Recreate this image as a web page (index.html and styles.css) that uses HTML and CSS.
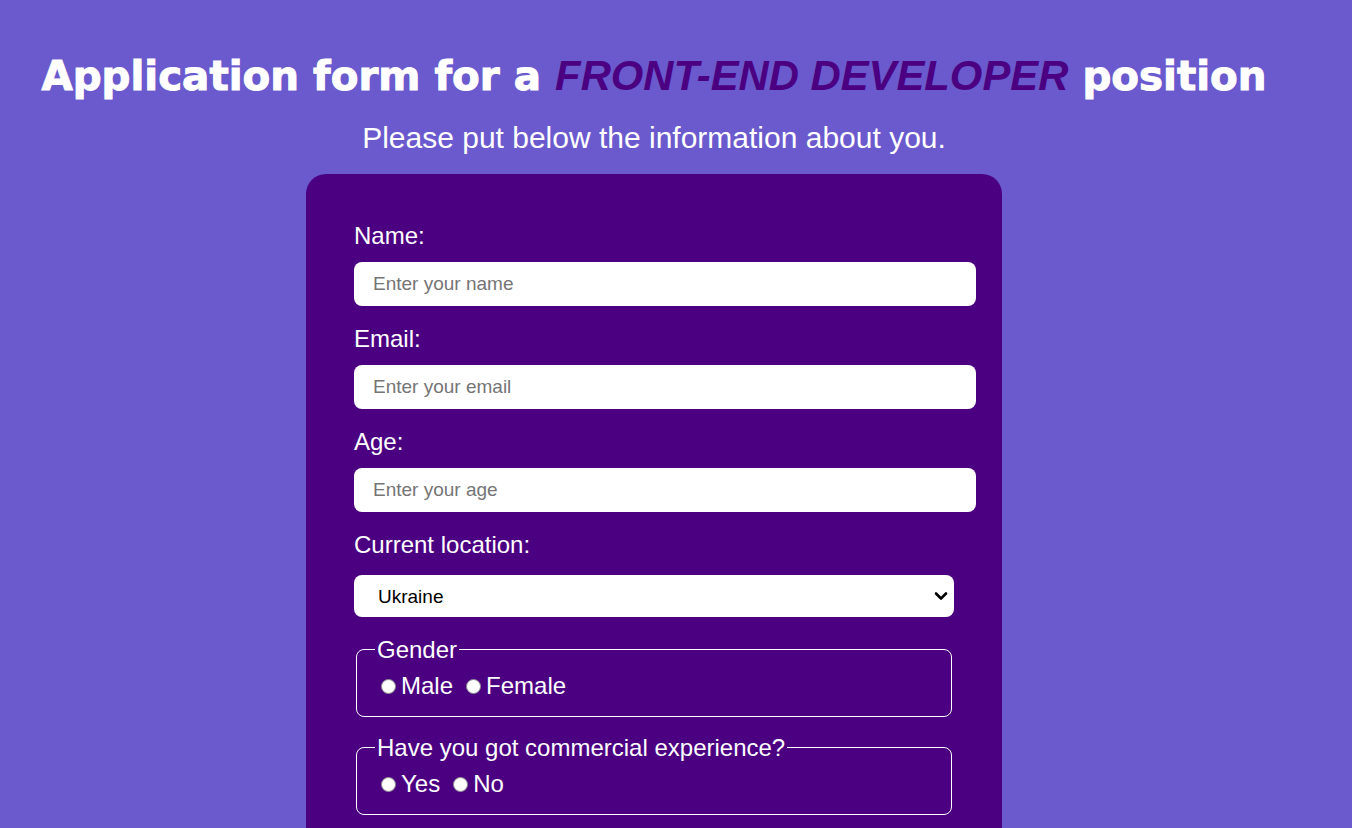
FILE: index.html
```html
<!DOCTYPE html>
<html lang="en">
<head>
<meta charset="utf-8">
<title>Application form</title>
<link rel="stylesheet" href="styles.css">
</head>
<body>
<div class="page">
  <h1 class="title"><span class="title-plain">Application form for a </span><em class="title-accent">FRONT-END DEVELOPER</em><span class="title-plain"> position</span></h1>
  <p class="subtitle">Please put below the information about you.</p>
  <form class="form">
    <label class="field-label" for="name">Name:</label>
    <input class="text-input" id="name" type="text" placeholder="Enter your name">
    <label class="field-label" for="email">Email:</label>
    <input class="text-input" id="email" type="email" placeholder="Enter your email">
    <label class="field-label" for="age">Age:</label>
    <input class="text-input" id="age" type="number" placeholder="Enter your age">
    <label class="field-label" for="location">Current location:</label>
    <div class="select-wrap">
      <select class="select-input" id="location">
        <option>Ukraine</option>
        <option>Poland</option>
        <option>Germany</option>
      </select>
      <svg class="select-arrow" width="14" height="10" viewBox="0 0 14 10" aria-hidden="true"><path d="M2 2.5 L7 7.5 L12 2.5" fill="none" stroke="#000" stroke-width="2.6" stroke-linecap="round" stroke-linejoin="round"/></svg>
    </div>
    <fieldset class="group">
      <legend class="group-legend">Gender</legend>
      <div class="options">
        <input class="radio" type="radio" name="gender" id="male"><label class="option-label" for="male">Male</label>
        <input class="radio" type="radio" name="gender" id="female"><label class="option-label" for="female">Female</label>
      </div>
    </fieldset>
    <fieldset class="group">
      <legend class="group-legend">Have you got commercial experience?</legend>
      <div class="options">
        <input class="radio" type="radio" name="exp" id="yes"><label class="option-label" for="yes">Yes</label>
        <input class="radio" type="radio" name="exp" id="no"><label class="option-label" for="no">No</label>
      </div>
    </fieldset>
  </form>
</div>
</body>
</html>
```

FILE: styles.css
```css
html, body {
  margin: 0;
  padding: 0;
}

body {
  background: #6a5acd;
  font-family: "Liberation Sans", Arial, sans-serif;
  color: #fff;
}

.page {
  padding: 50px 44px 40px 0;
}

.title {
  margin: 0;
  text-align: center;
  line-height: 52px;
  white-space: nowrap;
}

.title-plain {
  font-family: "DejaVu Sans", "Liberation Sans", sans-serif;
  font-weight: bold;
  font-size: 40.4px;
  color: #fff;
  -webkit-text-stroke: 1px #fff;
}

.title-accent {
  font-family: "Liberation Sans", Arial, sans-serif;
  font-weight: bold;
  font-style: italic;
  font-size: 41.8px;
  color: #4b0082;
}

.subtitle {
  margin: 16px 0 0;
  text-align: center;
  font-size: 30px;
  line-height: 34px;
}

.form {
  box-sizing: border-box;
  width: 696px;
  margin: 19px auto 0;
  padding: 48px 48px 60px;
  background: #4b0082;
  border-radius: 20px;
}

.field-label {
  display: block;
  font-size: 24px;
  line-height: 28px;
  margin-top: 19px;
}

.field-label:first-child {
  margin-top: 0;
}

.text-input {
  display: block;
  box-sizing: border-box;
  width: 622px;
  height: 44px;
  margin: 12px 0 0;
  padding: 0 0 0 19px;
  border: none;
  border-radius: 8px;
  background: #fff;
  font-family: "Liberation Sans", Arial, sans-serif;
  font-size: 19px;
  color: #000;
  outline: none;
}

.text-input::placeholder {
  color: #757575;
}

.select-wrap {
  position: relative;
  width: 600px;
  margin-top: 16px;
}

.select-input {
  appearance: none;
  -webkit-appearance: none;
  display: block;
  box-sizing: border-box;
  width: 600px;
  height: 42px;
  margin: 0;
  padding: 0 30px 0 24px;
  border: none;
  border-radius: 8px;
  background: #fff;
  font-family: "Liberation Sans", Arial, sans-serif;
  font-size: 19px;
  color: #000;
}

.select-arrow {
  position: absolute;
  right: 6px;
  top: 16px;
  pointer-events: none;
}

.group {
  margin: 19px 2px 0;
  padding: 9px 18px 16px;
  border: 1px solid #fff;
  border-radius: 8px;
  font-size: 24px;
}

.group + .group {
  margin-top: 17px;
}

.group-legend {
  padding: 0 2px;
  font-size: 24px;
  line-height: 27px;
}

.options {
  display: flex;
  align-items: center;
  line-height: 28px;
}

.radio {
  appearance: none;
  -webkit-appearance: none;
  box-sizing: border-box;
  width: 15px;
  height: 15px;
  margin: 0 5px 0 6px;
  border: 1.5px solid #8c8c8c;
  border-radius: 50%;
  background: #fff;
}

.option-label {
  margin-right: 7px;
}
```
